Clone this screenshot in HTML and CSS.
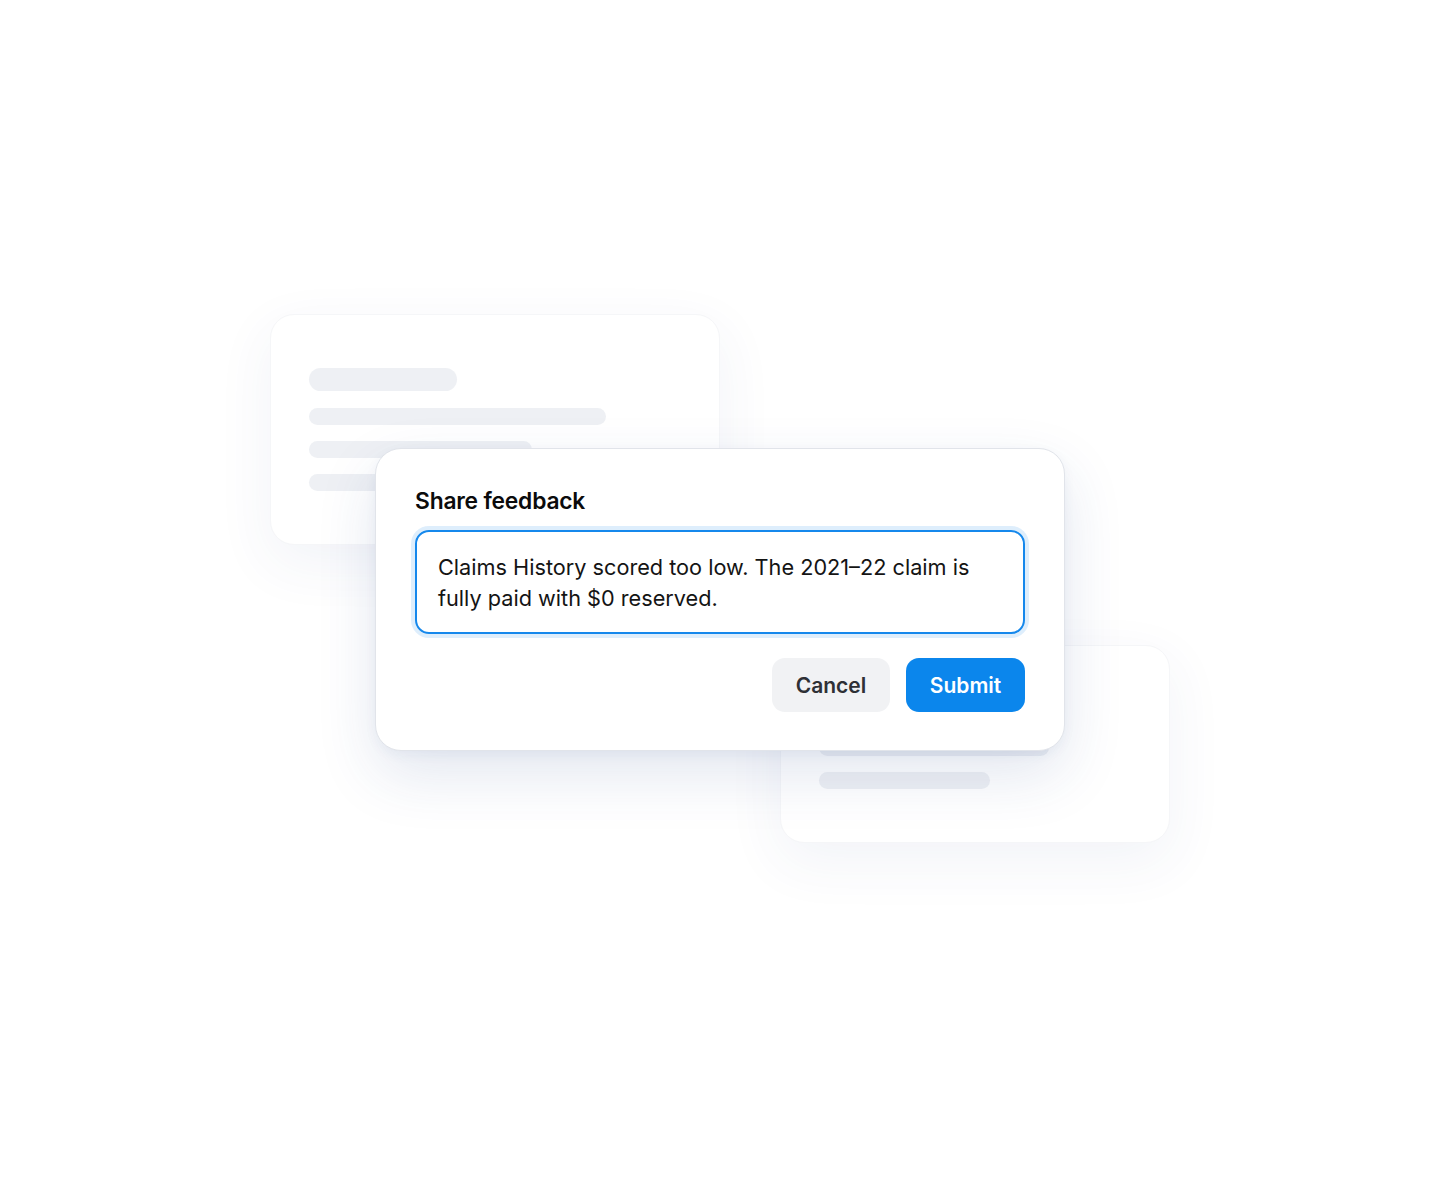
FILE: index.html
```html
<!DOCTYPE html>
<html lang="en">
<head>
<meta charset="utf-8">
<title>Share feedback</title>
<link rel="stylesheet" href="styles.css">
</head>
<body>
<div class="stage">
  <div class="ghost ghost-a">
    <div class="sk sk-title"></div>
    <div class="sk sk-line w1"></div>
    <div class="sk sk-line w2"></div>
    <div class="sk sk-line w3"></div>
  </div>
  <div class="ghost ghost-b">
    <div class="sk sk-title"></div>
    <div class="sk sk-line w4"></div>
    <div class="sk sk-line w5"></div>
  </div>
  <div class="dialog">
    <h2 class="dialog-title">Share feedback</h2>
    <div class="field">Claims History scored too low. The 2021–22 claim is fully paid with $0 reserved.</div>
    <div class="actions">
      <button class="btn btn-cancel">Cancel</button>
      <button class="btn btn-submit">Submit</button>
    </div>
  </div>
</div>
</body>
</html>
```
FILE: styles.css
```css
* { box-sizing: border-box; }
html, body { margin: 0; padding: 0; background: #ffffff; }
body { font-family: Inter, "Noto Sans", "Liberation Sans", sans-serif; color: #111; }

.stage {
  position: relative;
  width: 1440px;
  height: 1200px;
  padding-top: 448px;
  overflow: hidden;
}

.ghost {
  position: absolute;
  background: #ffffff;
  border: 1px solid #f2f3f6;
  border-radius: 24px;
  box-shadow: 0 18px 54px rgba(40, 70, 140, 0.08);
  opacity: 0.75;
}
.ghost-a { left: 270px; top: 314px; width: 450px; height: 231px; padding: 53px 38px 0; }
.ghost-b { left: 780px; top: 645px; width: 390px; height: 198px; padding: 50px 38px 0; }

.sk { background: #e9ecf1; border-radius: 10px; }
.sk-title { width: 148px; height: 23px; border-radius: 12px; margin-bottom: 17px; }
.sk-line { height: 17px; margin-bottom: 16px; }
.w1 { width: 297px; }
.w2 { width: 223px; }
.w3 { width: 190px; }
.w4 { width: 230px; }
.w5 { width: 171px; }
.ghost-b .sk-title { margin-bottom: 20px; }

.dialog {
  position: relative;
  width: 690px;
  margin: 0 auto;
  background: #ffffff;
  border: 1px solid #e1e4ea;
  border-radius: 26px;
  padding: 38px 39px 38px;
  box-shadow: 0 24px 60px rgba(35, 70, 140, 0.13), 0 4px 12px rgba(35, 70, 140, 0.05);
}

.dialog-title {
  margin: 0 0 15px;
  font-size: 22.8px;
  line-height: 28px;
  font-weight: 600;
  letter-spacing: -0.2px;
  color: #0b0b0c;
}

.field {
  border: 2px solid #1588ec;
  border-radius: 14px;
  box-shadow: 0 0 0 4px rgba(21, 136, 236, 0.14);
  padding: 20px 21px 18px;
  font-size: 21.7px;
  line-height: 31px;
  color: #141414;
  min-height: 104px;
}

.actions {
  display: flex;
  justify-content: flex-end;
  gap: 16px;
  margin-top: 24px;
}

.btn {
  font-family: inherit;
  font-size: 21px;
  font-weight: 600;
  height: 54px;
  border: none;
  border-radius: 13px;
  padding: 0 20px;
  cursor: pointer;
}
.btn-cancel { background: #f1f2f4; color: #2e3035; width: 118px; }
.btn-submit { background: #0b86ec; color: #ffffff; width: 119px; }
```
